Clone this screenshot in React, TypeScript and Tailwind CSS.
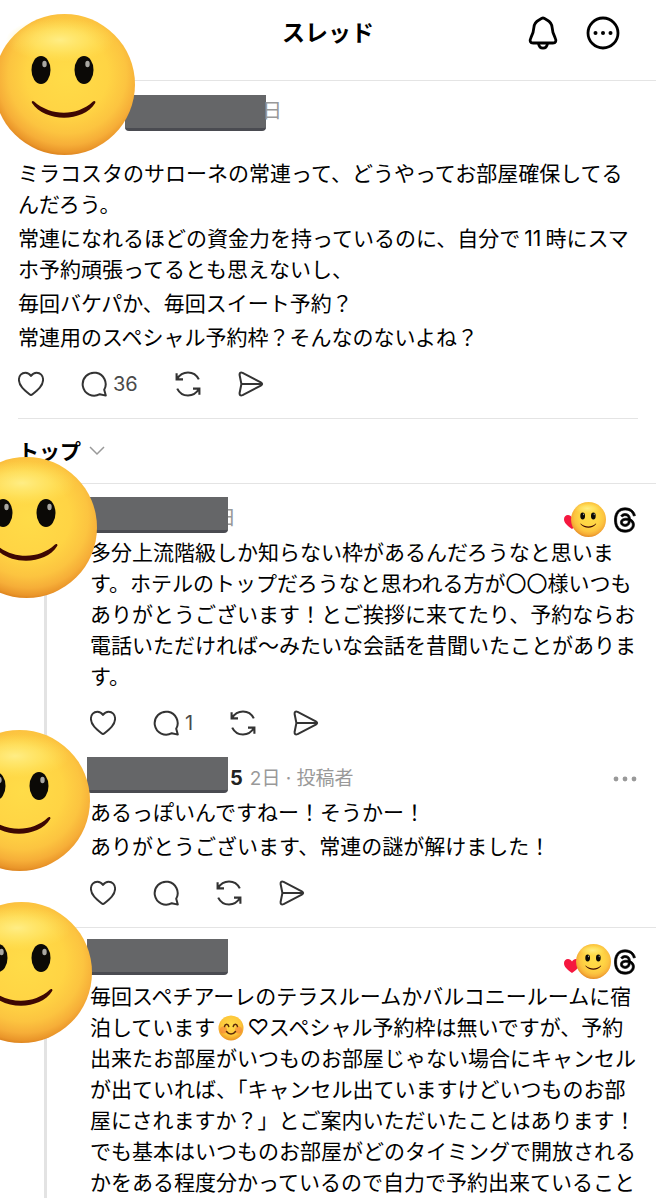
import { useId, type ReactNode } from "react";
import { FaThreads } from "react-icons/fa6";

function Smiley({ className }: { className: string }) {
    const id = useId();

    return (
        <svg viewBox="0 0 141 141" className={className} aria-hidden="true">
            <defs>
                <radialGradient id={`${id}face`} cx="0.52" cy="0.43" r="0.58">
                    <stop offset="0" stopColor="#ffdc48" />
                    <stop offset="0.5" stopColor="#ffd444" />
                    <stop offset="0.72" stopColor="#fcc440" />
                    <stop offset="0.86" stopColor="#f6ae38" />
                    <stop offset="0.95" stopColor="#ea962a" />
                    <stop offset="1" stopColor="#d87e1a" />
                </radialGradient>
                <radialGradient id={`${id}shine`} cx="0.5" cy="0.5" r="0.5">
                    <stop offset="0" stopColor="#fff08c" stopOpacity="0.9" />
                    <stop offset="0.5" stopColor="#ffea70" stopOpacity="0.6" />
                    <stop offset="1" stopColor="#ffe55c" stopOpacity="0" />
                </radialGradient>
            </defs>
            <circle cx="70.5" cy="70.5" r="70.5" fill={`url(#${id}face)`} />
            <ellipse cx="66" cy="26" rx="54" ry="22" fill={`url(#${id}shine)`} />
            <ellipse cx="47" cy="56" rx="9.5" ry="14" fill="#0b0906" />
            <ellipse cx="90" cy="56" rx="9.5" ry="14" fill="#0b0906" />
            <ellipse cx="50.500" cy="50" rx="2.2" ry="3.2" fill="#a9a7a2" />
            <ellipse cx="93.500" cy="50" rx="2.2" ry="3.2" fill="#a9a7a2" />
            <path d="M38 89c-.8-1.600 .8-2.600 2-1.400 17 15 43 15 59 0 1.400-1.200 3-.2 2.200 1.400-12 19.500-50 19.500-63.200 0z" fill="#3d0703" />
        </svg>
    );
}

function BlushEmoji() {
    return (
        <svg viewBox="0 0 26 26" className="mx-[3px] inline-block size-[26px] align-[-6px]" role="img" aria-label="😊">
            <defs>
                <radialGradient id="blush" cx="0.5" cy="0.4" r="0.62">
                    <stop offset="0" stopColor="#ffdd4a" />
                    <stop offset="0.65" stopColor="#fdc63a" />
                    <stop offset="1" stopColor="#e98f1f" />
                </radialGradient>
            </defs>
            <circle cx="13" cy="13" r="12.500" fill="url(#blush)" />
            <circle cx="5.500" cy="15" r="3.500" fill="#f4713a" opacity="0.5" />
            <circle cx="20.500" cy="15" r="3.500" fill="#f4713a" opacity="0.5" />
            <path d="M6.500 11.500c.6-3 3.700-3 4.300 0M15.200 11.500c.6-3 3.700-3 4.300 0M8.500 16.500c2.400 3.400 6.600 3.400 9 0" fill="none" stroke="#5b2a0a" strokeWidth="1.500" strokeLinecap="round" />
        </svg>
    );
}

function HeartIcon() {
    return (
        <svg viewBox="0 0 26 26" className="size-[26px]" fill="none" stroke="currentColor" strokeWidth="1.900" strokeLinejoin="round">
            <path d="M13 4.900C11.500 2.700 9.500 1.700 7.400 1.700 3.700 1.700.9 4.700.9 8.700c0 6 5.300 10.300 10.600 14.600q1.500 1.200 3 0C19.800 19 25.100 14.700 25.100 8.700c0-4-2.800-7-6.500-7-2.100 0-4.100 1-5.600 3.200z" />
        </svg>
    );
}

function CommentIcon() {
    return (
        <svg viewBox="0 0 26 26" className="size-[26px]" fill="none" stroke="currentColor" strokeWidth="2" strokeLinejoin="round">
            <path d="M23.200 18.800A11.500 11.500 0 1 0 18.800 23.200L24.800 24.600z" />
        </svg>
    );
}

function RepostIcon() {
    return (
        <svg viewBox="0 0 26 26" className="size-[26px]" fill="none" stroke="currentColor" strokeWidth="2.100">
            <path d="M1.600 2.300v6.100h6.400M1.800 8.200C4.400 4 8.500 1.500 13 1.500c4.700 0 8.700 2.700 10.800 6.900" />
            <path d="M24.400 23.700v-6.100H18M24.200 17.800C21.600 22 17.500 24.500 13 24.500c-4.700 0-8.700-2.700-10.800-6.900" />
        </svg>
    );
}

function SendIcon() {
    return (
        <svg viewBox="0 0 26 26" className="size-[26px]" fill="none" stroke="currentColor" strokeWidth="2" strokeLinejoin="round">
            <path d="M4.600 1.900 22.800 11.300q2.700 1.700 0 3.400L4.600 24.100Q1.300 25.200 1.600 22L3.400 13 1.600 4Q1.300.8 4.600 1.900zM3.400 13h20.500" />
        </svg>
    );
}

function Actions({ comments }: { comments?: number }) {
    return (
        <div className="mt-[17px] flex h-[28px] items-center gap-[37px] text-[#333333]">
            <button type="button" aria-label="いいね"><HeartIcon /></button>
            <button type="button" aria-label="返信" className="flex items-center gap-[6px]">
                <CommentIcon />
                {comments && <span className="text-[20px] leading-[26px] text-[#4a4a4a]">{comments}</span>}
            </button>
            <button type="button" aria-label="再投稿"><RepostIcon /></button>
            <button type="button" aria-label="シェア"><SendIcon /></button>
        </div>
    );
}

// Hides the user name
function NameMask() {
    return (
        <span className="h-[36px] w-[141px] shrink-0 rounded-b-[4px] border-b-[3px] border-[#4a4b51] bg-[#656668]" />
    );
}

function Reactions({ shifted = false }: { shifted?: boolean }) {
    return (
        <div className="relative ml-auto flex h-[36px] items-center gap-[5px] pt-[9px]">
            <svg viewBox="0 0 16 14" className={shifted ? "absolute top-[20px] -left-[12px] h-[14px] w-[16px]" : "absolute top-[18px] -left-[7px] h-[14px] w-[16px]"} aria-hidden="true">
                <path d="M8 14C3 10.500 0 7.500 0 4.200 0 1.800 1.700 0 4 0c1.700 0 3.100.9 4 2.400C8.900.9 10.300 0 12 0c2.300 0 4 1.800 4 4.200C16 7.500 13 10.500 8 14z" fill="#f5173f" />
            </svg>
            <Smiley className={shifted ? "relative -mr-[4px] size-[35px]" : "relative mr-[1px] size-[35px]"} />
            <FaThreads className="size-[26px] stroke-black stroke-[14px] text-black" aria-label="Threads" />
        </div>
    );
}

type ReplyProps = {
    className: string;
    avatar: string;
    header: ReactNode;
    thread?: boolean;
    children: ReactNode;
};

function Reply({ className, avatar, header, thread = false, children }: ReplyProps) {
    return (
        <article className={`relative grid grid-cols-[90px_1fr] pr-[18px] ${className}`}>
            <div className="flex justify-center">
                {thread && <span className="w-[3px] bg-[#e3e3e3]" />}
            </div>
            <div>
                <div className="-ml-[3px] flex h-[36px] items-center">{header}</div>
                {children}
            </div>
            <Smiley className={`absolute size-[141px] ${avatar}`} />
        </article>
    );
}

export default function App() {
    return (
        <div className="w-full overflow-hidden bg-white font-['Inter','Noto_Sans_CJK_JP',sans-serif] text-[21px] leading-[31px] text-black">
            <header className="grid h-[81px] grid-cols-[1fr_auto_1fr] items-center border-b border-[#e4e4e4] px-[36px] pb-[14px]">
                <span />
                <h1 className="text-[23px] font-bold">スレッド</h1>
                <div className="flex items-center justify-end gap-[27px]">
                    <button type="button" aria-label="通知">
                        <svg viewBox="0 0 32 34" className="h-[34px] w-[32px]" fill="none" stroke="currentColor" strokeWidth="2.800" strokeLinejoin="round">
                            <path d="M16 2c-1.600 0-2.700 1.200-4 2C8.600 5.800 7.200 8 6.900 11.400c-.3 4.600-1 6.900-3 10.400-1.700 3.200-.6 5.200 2.300 5.200h19.600c2.900 0 4-2 2.300-5.200-2-3.500-2.700-5.800-3-10.400C24.800 8 23.400 5.800 20 4c-1.300-.8-2.400-2-4-2z" />
                            <path d="M11.500 27.500c.5 3 2.200 4.700 4.500 4.700s4-1.700 4.500-4.700" />
                        </svg>
                    </button>
                    <button type="button" aria-label="その他">
                        <svg viewBox="0 0 34 34" className="size-[34px]" fill="none" stroke="currentColor" strokeWidth="2.800">
                            <circle cx="17" cy="17" r="15" />
                            <g fill="currentColor" stroke="none">
                                <circle cx="9.500" cy="17" r="2" />
                                <circle cx="17" cy="17" r="2" />
                                <circle cx="24.500" cy="17" r="2" />
                            </g>
                        </svg>
                    </button>
                </div>
            </header>

            <main>
                <article className="relative px-[18px] pt-[14px]">
                    <div className="ml-[107px] flex h-[36px] items-center text-[20px] text-[#999999]">
                        <NameMask />
                        <span className="-ml-[4px] pb-[3px]">日</span>
                    </div>
                    <div className="mt-[27px] flex flex-col gap-[3px]">
                        <p>ミラコスタのサローネの常連って、どうやってお部屋確保してるんだろう。</p>
                        <p>常連になれるほどの資金力を持っているのに、自分で<span className="mx-[4px]">11</span>時にスマホ予約頑張ってるとも思えないし、</p>
                        <p>毎回バケパか、毎回スイート予約？</p>
                        <p>常連用のスペシャル予約枠？そんなのないよね？</p>
                    </div>
                    <Actions comments={36} />
                    <Smiley className="absolute -top-[67px] -left-[6px] size-[141px]" />
                </article>

                <div className="mx-[18px] mt-[20px] flex h-[65px] items-center border-t border-[#e4e4e4]">
                    <button type="button" className="flex items-center gap-[8px] font-bold">
                        トップ
                        <svg viewBox="0 0 16 10" className="h-[10px] w-[16px]" fill="none" stroke="#999999" strokeWidth="1.500">
                            <path d="M1 1l7 7 7-7" />
                        </svg>
                    </button>
                </div>

                <Reply
                    className="border-t border-[#e4e4e4] pt-[13px]"
                    avatar="-top-[27px] -left-[44px]"
                    thread
                    header={
                        <>
                            <NameMask />
                            <span className="-ml-[12px] w-[20px] pt-[6px] text-[20px] text-[#999999] [clip-path:inset(0_0_0_12px)]">日</span>
                            <Reactions />
                        </>
                    }
                >
                    <p className="mt-[4px]">多分上流階級しか知らない枠があるんだろうなと思います。ホテルのトップだろうなと思われる方が〇〇様いつもありがとうございます！とご挨拶に来てたり、予約ならお電話いただければ〜みたいな会話を昔聞いたことがあります。</p>
                    <Actions comments={1} />
                </Reply>

                <Reply
                    className="pt-[20px]"
                    avatar="-top-[7px] -left-[51px]"
                    header={
                        <>
                            <NameMask />
                            <span className="ml-[2px] pt-[7px] text-[20px] font-bold text-[#222222]">5</span>
                            <span className="ml-[7px] pt-[7px] text-[19px] text-[#999999]">2日 · 投稿者</span>
                            <button type="button" aria-label="その他" className="ml-auto pt-[7px]">
                                <svg viewBox="0 0 26 6" className="h-[6px] w-[26px]" fill="#999999">
                                    <circle cx="4" cy="3" r="2.400" />
                                    <circle cx="13" cy="3" r="2.400" />
                                    <circle cx="22" cy="3" r="2.400" />
                                </svg>
                            </button>
                        </>
                    }
                >
                    <div className="mt-[4px] flex flex-col gap-[3px]">
                        <p>あるっぽいんですねー！そうかー！</p>
                        <p>ありがとうございます、常連の謎が解けました！</p>
                    </div>
                    <Actions />
                </Reply>

                <Reply
                    className="mt-[20px] border-t border-[#e4e4e4] pt-[11px] pb-[2px]"
                    avatar="-top-[26px] -left-[49px]"
                    thread
                    header={
                        <>
                            <NameMask />
                            <Reactions shifted />
                        </>
                    }
                >
                    <p className="mt-[6px]">
                        毎回スペチアーレのテラスルームかバルコニールームに宿泊しています<BlushEmoji />♡スペシャル予約枠は無いですが、予約出来たお部屋がいつものお部屋じゃない場合にキャンセルが出ていれば、「キャンセル出ていますけどいつものお部屋にされますか？」とご案内いただいたことはあります！でも基本はいつものお部屋がどのタイミングで開放されるかをある程度分かっているので自力で予約出来ていること
                    </p>
                </Reply>
            </main>
        </div>
    );
}
